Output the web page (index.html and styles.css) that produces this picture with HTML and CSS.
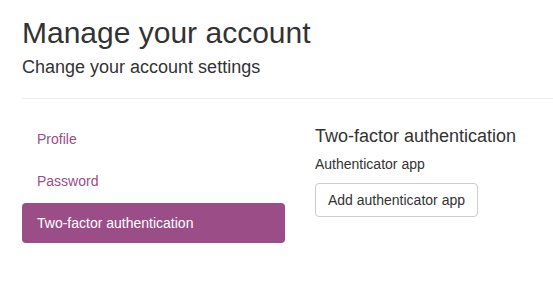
FILE: index.html
```html
<!DOCTYPE html>
<html>
<head>
    <meta charset="UTF-8">
    <title>Manage your account</title>
    <link rel="stylesheet" href="styles.css">
</head>
<body>
    <div class="page">
        <h1>Manage your account</h1>

        <div class="manage">
            <h4 class="subtitle">Change your account settings</h4>
            <hr>
            <div class="row">
                <ul class="nav-pills">
                    <li><a href="#">Profile</a></li>
                    <li><a href="#">Password</a></li>
                    <li class="active"><a href="#">Two-factor authentication</a></li>
                </ul>

                <div class="content">
                    <h4>Two-factor authentication</h4>
                    <h5>Authenticator app</h5>
                    <a href="#" class="btn">Add authenticator app</a>
                </div>
            </div>
        </div>
    </div>
</body>
</html>
```

FILE: styles.css
```css
html, body {
    margin: 0;
    overflow: hidden;
}

body {
    font-family: "Liberation Sans", Arial, Helvetica, sans-serif;
    font-size: 14px;
    line-height: 1.42857;
    color: #333;
    background: #fff;
}

.page {
    padding: 16px 0 0 22px;
}

h1, h4, h5 {
    font-weight: 500;
    line-height: 1.1;
}

h1 {
    font-size: 30px;
    margin: 0 0 9px;
}

h4 {
    font-size: 18px;
    margin: 10px 0;
}

h5 {
    font-size: 14px;
    margin: 10px 0;
}

.subtitle {
    margin-top: 0;
}

hr {
    margin: 20px 0;
    border: 0;
    border-top: 1px solid #eee;
}

.row {
    display: grid;
    grid-template-columns: 263px 1fr;
    column-gap: 30px;
}

.nav-pills {
    list-style: none;
    margin: 0;
    padding: 0;
}

.nav-pills li + li {
    margin-top: 2px;
}

.nav-pills a {
    display: block;
    padding: 10px 15px;
    line-height: 20px;
    border-radius: 4px;
    color: #9b4d87;
    text-decoration: none;
}

.nav-pills .active a {
    background: #9b4d87;
    color: #fff;
}

.content h4 {
    margin-top: 8px;
}

.btn {
    display: inline-block;
    margin-top: 1px;
    padding: 6px 12px;
    line-height: 20px;
    border: 1px solid #ccc;
    border-radius: 4px;
    color: #333;
    background: #fff;
    text-decoration: none;
}
```
